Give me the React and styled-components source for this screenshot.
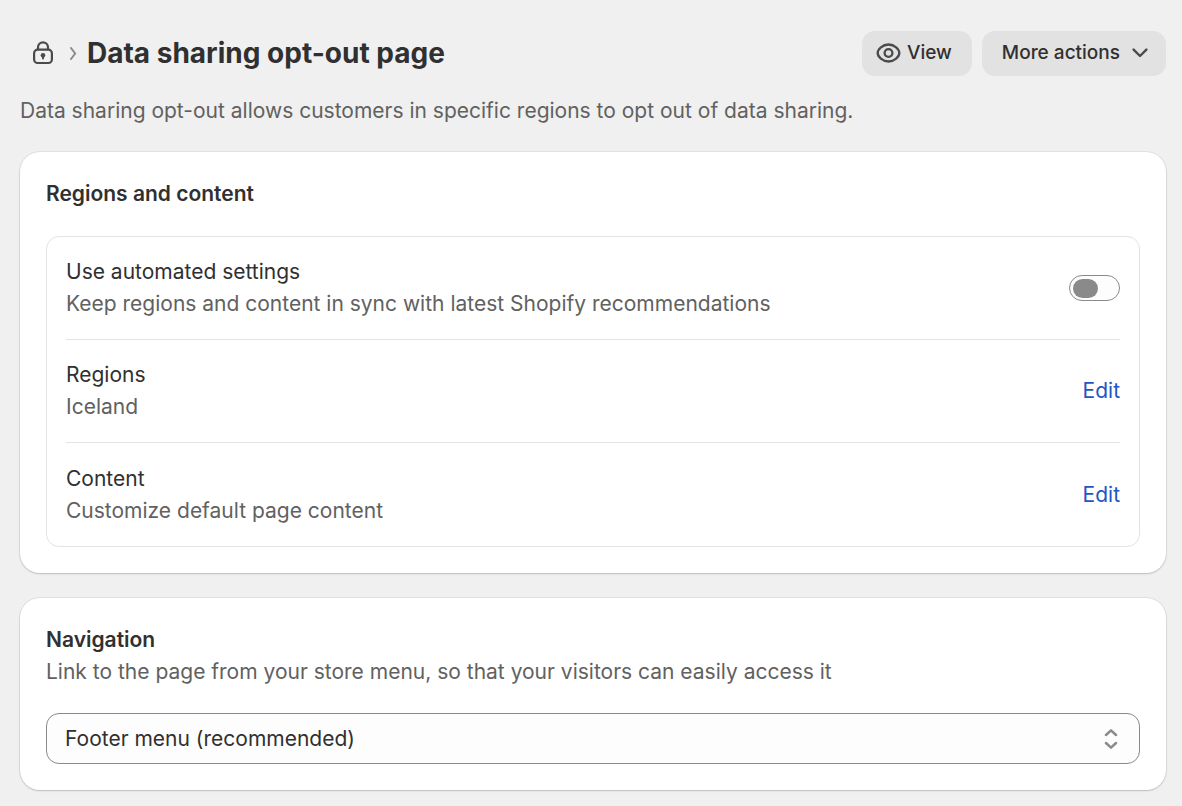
import { useState } from "react";
import styled, { createGlobalStyle } from "styled-components";

const GlobalStyle = createGlobalStyle`
    * {
        box-sizing: border-box;
    }

    body {
        margin: 0;
        background: #f0f0f0;
        color: #303030;
        font-family: Inter, "Liberation Sans", sans-serif;
        font-size: 21px;
        line-height: 32px;
    }

    h1, h2, h3, p {
        margin: 0;
    }

    button, select {
        font: inherit;
        color: inherit;
    }
`;

const LockIcon = () => (
    <svg width="22" height="24" viewBox="0 0 22 24" fill="none" aria-hidden="true">
        <rect x="2.1" y="8.6" width="17.8" height="13.4" rx="3.6" stroke="#4a4a4a" strokeWidth="2.2" />
        <path d="M6 8.6V6.4a5 5 0 0 1 10 0V8.6" stroke="#4a4a4a" strokeWidth="2.2" />
        <circle cx="11" cy="14.2" r="2.3" fill="#4a4a4a" />
        <path d="M11 14.8v2.7" stroke="#4a4a4a" strokeWidth="2" strokeLinecap="round" />
    </svg>
);

const CrumbIcon = () => (
    <svg width="8" height="14" viewBox="0 0 8 14" fill="none" aria-hidden="true">
        <path d="M2 2l4.2 5.5L2 13" stroke="#8a8a8a" strokeWidth="2" strokeLinecap="round" strokeLinejoin="round" />
    </svg>
);

const EyeIcon = () => (
    <svg width="25" height="20" viewBox="0 0 25 20" fill="none" aria-hidden="true">
        <path
            d="M12.5 1.5C18.4 1.5 23.3 6.1 23.3 10S18.4 18.5 12.5 18.5 1.7 13.9 1.7 10 6.6 1.5 12.5 1.5Z"
            stroke="#4a4a4a"
            strokeWidth="2.3"
        />
        <circle cx="12.5" cy="10" r="3.9" stroke="#4a4a4a" strokeWidth="2.3" />
    </svg>
);

const ChevronIcon = () => (
    <svg width="16" height="10" viewBox="0 0 16 10" fill="none" aria-hidden="true">
        <path d="M1.6 1.6L8 8l6.4-6.4" stroke="#4a4a4a" strokeWidth="2.4" strokeLinecap="round" strokeLinejoin="round" />
    </svg>
);

const SelectIcon = () => (
    <svg width="14" height="20" viewBox="0 0 14 20" fill="none" aria-hidden="true">
        <path
            d="M2 6l5-4.6L12 6M2 14l5 4.6L12 14"
            stroke="#8a8a8a"
            strokeWidth="2.5"
            strokeLinecap="round"
            strokeLinejoin="round"
        />
    </svg>
);

const App = () => {
    const [automated, setAutomated] = useState(false);

    return (
        <Page>
            <GlobalStyle />
            <Header>
                <Breadcrumb>
                    <LockIcon />
                    <CrumbIcon />
                    <Title>Data sharing opt-out page</Title>
                </Breadcrumb>
                <Actions>
                    <ActionButton type="button" $icon>
                        <EyeIcon />
                        View
                    </ActionButton>
                    <ActionButton type="button">
                        More actions
                        <ChevronIcon />
                    </ActionButton>
                </Actions>
            </Header>
            <Intro>
                Data sharing opt-out allows customers in specific regions to opt
                out of data sharing.
            </Intro>

            <Card>
                <CardTitle>Regions and content</CardTitle>
                <Settings>
                    <Row>
                        <div>
                            <RowTitle as="label" htmlFor="automated">
                                Use automated settings
                            </RowTitle>
                            <Muted>
                                Keep regions and content in sync with latest
                                Shopify recommendations
                            </Muted>
                        </div>
                        <Toggle
                            id="automated"
                            type="checkbox"
                            role="switch"
                            checked={automated}
                            onChange={(e) => setAutomated(e.target.checked)}
                        />
                    </Row>
                    <Row>
                        <div>
                            <RowTitle>Regions</RowTitle>
                            <Muted>Iceland</Muted>
                        </div>
                        <EditLink href="#regions" aria-label="Edit regions">
                            Edit
                        </EditLink>
                    </Row>
                    <Row>
                        <div>
                            <RowTitle>Content</RowTitle>
                            <Muted>Customize default page content</Muted>
                        </div>
                        <EditLink href="#content" aria-label="Edit content">
                            Edit
                        </EditLink>
                    </Row>
                </Settings>
            </Card>

            <Card>
                <CardTitle as="label" htmlFor="menu">
                    Navigation
                </CardTitle>
                <Muted>
                    Link to the page from your store menu, so that your visitors
                    can easily access it
                </Muted>
                <SelectBox>
                    <select id="menu" defaultValue="footer">
                        <option value="footer">Footer menu (recommended)</option>
                        <option value="main">Main menu</option>
                    </select>
                    <SelectIcon />
                </SelectBox>
            </Card>
        </Page>
    );
};

const Page = styled.main`
    padding: 31px 16px 16px 20px;
`;

const Header = styled.header`
    display: flex;
    align-items: center;
    justify-content: space-between;
    gap: 20px;
`;

const Breadcrumb = styled.div`
    display: flex;
    align-items: center;
    padding: 0 0 2px 12px;

    svg {
        flex: none;
    }

    svg + svg {
        margin: 0 10px 0 15px;
    }
`;

const Title = styled.h1`
    font-size: 28px;
    line-height: 40px;
    font-weight: 650;
`;

const Actions = styled.div`
    display: flex;
    gap: 10px;
`;

const ActionButton = styled.button`
    display: flex;
    align-items: center;
    gap: ${({ $icon }) => ($icon ? 6 : 12)}px;
    height: 45px;
    padding: ${({ $icon }) => ($icon ? "0 20px 2px 14px" : "0 18px 2px 20px")};
    border: none;
    border-radius: 13px;
    background: #e2e2e2;
    font-size: 19px;
    font-weight: 500;
    white-space: nowrap;
    cursor: pointer;
`;

const Intro = styled.p`
    margin: 19px 0 25px;
    color: #616161;
`;

const Card = styled.section`
    padding: 26px;
    border-radius: 20px;
    background: #fff;
    box-shadow: 0 0 0 1px rgba(0, 0, 0, 0.06), 0 1px 2px rgba(0, 0, 0, 0.16);

    & + & {
        margin-top: 25px;
    }
`;

const CardTitle = styled.h2`
    display: block;
    font-size: 21px;
    line-height: 32px;
    font-weight: 600;
`;

const Settings = styled.div`
    margin-top: 26px;
    padding: 0 19px;
    border: 1px solid #e3e3e3;
    border-radius: 13px;
`;

const Row = styled.div`
    display: flex;
    align-items: center;
    justify-content: space-between;
    gap: 20px;
    min-height: 103px;

    &:not(:last-child) {
        border-bottom: 1px solid #e3e3e3;
    }
`;

const RowTitle = styled.h3`
    display: block;
    font-size: 21px;
    line-height: 32px;
    font-weight: 400;
`;

const Muted = styled.p`
    color: #616161;
`;

const Toggle = styled.input`
    flex: none;
    display: flex;
    align-items: center;
    appearance: none;
    width: 51px;
    height: 26px;
    margin: 0;
    padding: 0 3px;
    border: 1px solid #8a8a8a;
    border-radius: 13px;
    background: #fdfdfd;
    cursor: pointer;

    &::before {
        content: "";
        width: 25px;
        height: 19px;
        border-radius: 10px;
        background: #8a8a8a;
    }

    &:checked {
        justify-content: flex-end;
        background: #303030;
    }

    &:checked::before {
        background: #fff;
    }
`;

const EditLink = styled.a`
    color: #1f55c4;
    text-decoration: none;
`;

const SelectBox = styled.div`
    display: grid;
    align-items: center;
    margin-top: 25px;

    select,
    svg {
        grid-area: 1 / 1;
    }

    select {
        appearance: none;
        width: 100%;
        height: 51px;
        padding: 0 48px 0 18px;
        border: 1px solid #8a8a8a;
        border-radius: 13px;
        background: #fdfdfd;
    }

    svg {
        justify-self: end;
        margin-right: 22px;
        pointer-events: none;
    }
`;

export default App;
